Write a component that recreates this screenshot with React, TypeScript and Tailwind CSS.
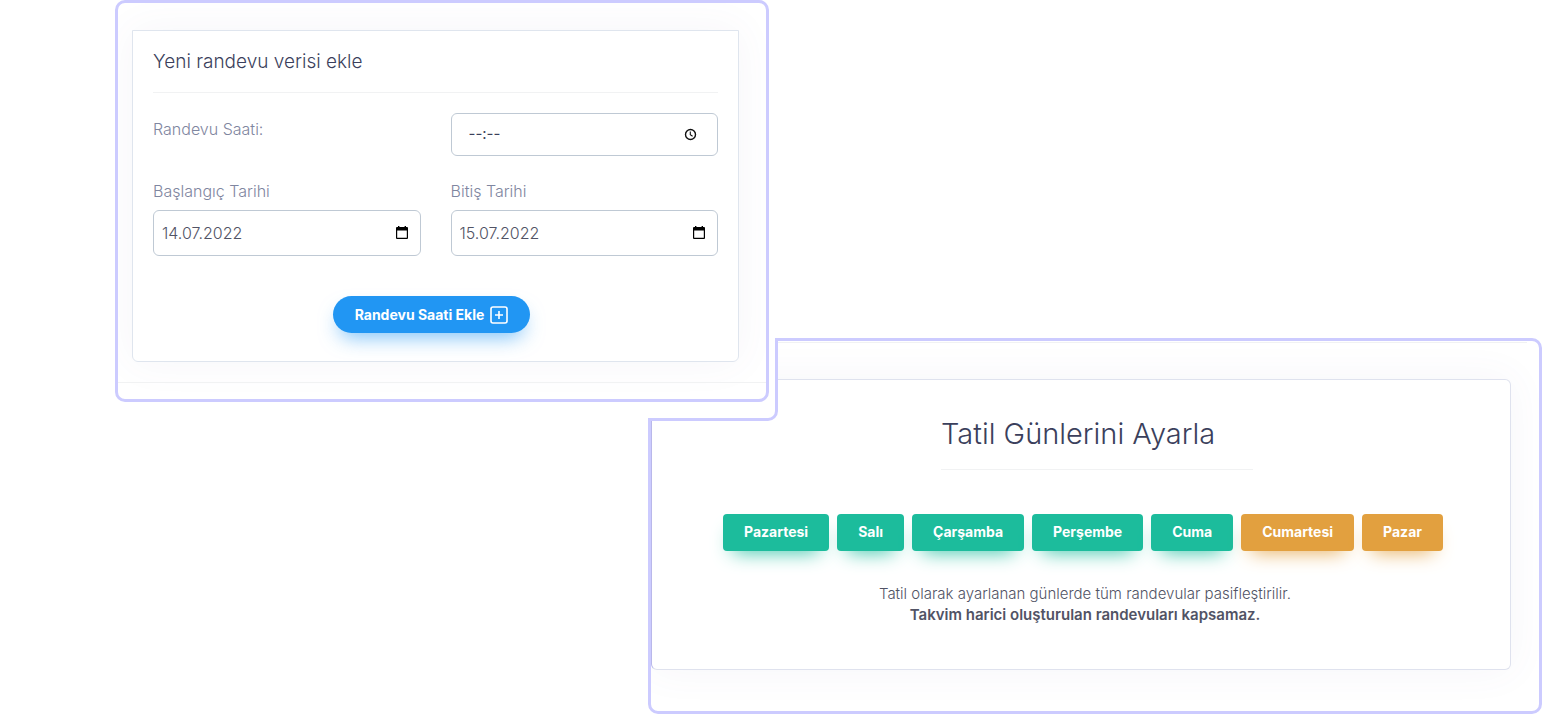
import React from "react";
import { clsx } from "clsx";

type Day = {
  name: string;
  holiday: boolean;
};

const days: Day[] = [
  { name: "Pazartesi", holiday: false },
  { name: "Salı", holiday: false },
  { name: "Çarşamba", holiday: false },
  { name: "Perşembe", holiday: false },
  { name: "Cuma", holiday: false },
  { name: "Cumartesi", holiday: true },
  { name: "Pazar", holiday: true },
];

function ClockIcon() {
  return (
    <svg width="13" height="13" viewBox="0 0 13 13" fill="none" stroke="#111" aria-hidden="true">
      <circle cx="6.5" cy="6.5" r="5" strokeWidth="1.4" />
      <path d="M6.3 3.5v3.3l2.3 1.4" strokeWidth="1.1" />
    </svg>
  );
}

function CalendarIcon() {
  return (
    <svg width="12" height="14" viewBox="0 0 12 14" aria-hidden="true">
      <path
        fill="#000"
        fillRule="evenodd"
        d="M2 0h1.4v1h5.2V0H10v1h1a1 1 0 0 1 1 1v10a1 1 0 0 1-1 1H1a1 1 0 0 1-1-1V2a1 1 0 0 1 1-1h1zM1.2 4.6v7.2h9.6V4.6z"
      />
    </svg>
  );
}

function PlusSquareIcon() {
  return (
    <svg width="18" height="18" viewBox="0 0 18 18" fill="none" stroke="#fff" aria-hidden="true">
      <rect x="1" y="1" width="16" height="16" rx="2" strokeWidth="1.6" />
      <path d="M9 5v8M5 9h8" strokeWidth="1.6" />
    </svg>
  );
}

function DateField({ id, label, value }: { id: string; label: string; value: string }) {
  return (
    <div className="min-w-0">
      <label htmlFor={id} className="mb-2 block text-base leading-[22px] font-light text-[#7f86a0]">
        {label}
      </label>
      <div className="flex h-[46px] items-center rounded-md border border-[#bfc9d4] bg-white pr-3 pl-2">
        <input
          id={id}
          type="text"
          defaultValue={value}
          className="min-w-0 flex-1 bg-transparent text-base font-light text-[#515365] outline-none"
        />
        <CalendarIcon />
      </div>
    </div>
  );
}

function NewAppointment() {
  return (
    <section className="z-10 col-span-2 col-start-2 row-start-1 overflow-hidden rounded-[10px] border-[3px] border-[#cccbff] bg-white pt-[27px] pb-4">
      <form className="mr-[27px] ml-[14px] rounded-b-md border border-[#dfe5ee] bg-white px-5 pt-5 pb-7 shadow-[0_0_40px_0_rgba(94,92,154,0.06)]">
        <h2 className="border-b border-[#f1f2f3] pb-[19px] text-[19px] leading-[22px] font-light text-[#3b3f5c]">
          Yeni randevu verisi ekle
        </h2>
        <div className="mt-5 grid grid-cols-2 gap-x-[30px] gap-y-6">
          <label htmlFor="time" className="pt-[5px] text-base leading-[22px] font-light text-[#7f86a0]">
            Randevu Saati:
          </label>
          <div className="flex h-[43px] items-center rounded-md border border-[#bfc9d4] bg-white pr-5 pl-[17px]">
            <input
              id="time"
              type="text"
              defaultValue="--:--"
              className="min-w-0 flex-1 bg-transparent text-[15px] text-[#3b3f5c] outline-none"
            />
            <ClockIcon />
          </div>
          <DateField id="start" label="Başlangıç Tarihi" value="14.07.2022" />
          <DateField id="end" label="Bitiş Tarihi" value="15.07.2022" />
        </div>
        <div className="mt-10 flex justify-center pr-2">
          <button
            type="button"
            className="flex h-[37px] items-center gap-[6px] rounded-full bg-[#2196f3] px-[22px] text-sm font-bold text-white shadow-[0_10px_20px_-6px_rgba(33,150,243,0.6)]"
          >
            Randevu Saati Ekle
            <PlusSquareIcon />
          </button>
        </div>
      </form>
      <hr className="mt-5 border-[#f1f2f3]" />
    </section>
  );
}

function Holidays() {
  return (
    <section className="relative col-span-2 col-start-3 row-start-2 -mt-16 rounded-[10px] border-[3px] border-[#cccbff] bg-white">
      <div className="overflow-hidden rounded-[7px] pb-[41px]">
        <hr className="mt-px mr-3 border-[#f1f2f3]" />
        <div className="mt-9 mr-7 rounded-md border border-[#dfe2ee] border-l-[#b9b8ea] bg-white pt-9 pb-11 shadow-[0_0_40px_0_rgba(94,92,154,0.06)]">
          <div className="flex justify-center pl-8">
            <h2 className="w-[312px] border-b border-[#f1f2f3] pb-[17px] text-[29px] leading-9 font-light whitespace-nowrap text-[#3b3f5c]">
              Tatil Günlerini Ayarla
            </h2>
          </div>
          <div className="mt-11 flex flex-wrap justify-center gap-2 pl-1">
            {days.map((day) => (
              <button
                key={day.name}
                type="button"
                className={clsx(
                  "h-[37px] rounded px-[21px] pb-0.5 text-sm font-bold text-white",
                  day.holiday
                    ? "bg-[#e2a03f] shadow-[0_10px_20px_-10px_#e2a03f]"
                    : "bg-[#1cbc9c] shadow-[0_10px_20px_-10px_#1cbc9c]",
                )}
              >
                {day.name}
              </button>
            ))}
          </div>
          <p className="mt-8 pl-2 text-center text-[15px] leading-[21px] font-light text-[#515365]">
            Tatil olarak ayarlanan günlerde tüm randevular pasifleştirilir.
            <br />
            <strong className="font-semibold">Takvim harici oluşturulan randevuları kapsamaz.</strong>
          </p>
        </div>
      </div>
      <div className="absolute -top-[3px] -left-[3px] h-[83px] w-[130px] rounded-br-[10px] border-r-[3px] border-b-[3px] border-[#cccbff] bg-white" />
    </section>
  );
}

export default function App() {
  return (
    <main className="grid grid-cols-[115fr_533fr_121fr_773fr] bg-white font-['Inter','Noto_Sans',sans-serif]">
      <NewAppointment />
      <Holidays />
    </main>
  );
}
